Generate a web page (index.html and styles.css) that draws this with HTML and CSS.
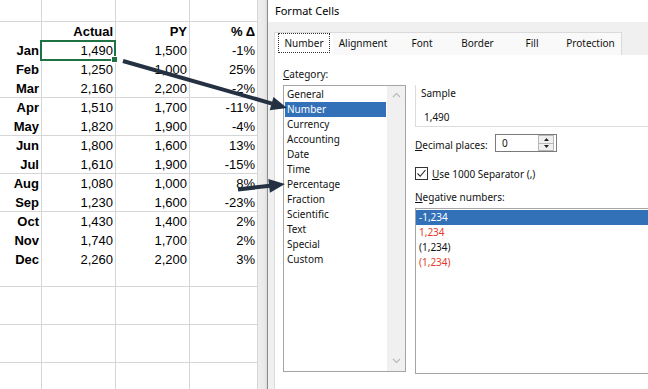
FILE: index.html
```html
<!DOCTYPE html>
<html>
<head>
<meta charset="utf-8">
<title>Format Cells</title>
<link rel="stylesheet" href="styles.css">
</head>
<body>
<div class="screen">
  <section class="sheet">
    <div class="grid">
      <div class="row head"><span></span><span>Actual</span><span>PY</span><span>% Δ</span></div>
      <div class="row"><span class="m">Jan</span><span class="sel">1,490</span><span>1,500</span><span>-1%</span></div>
      <div class="row"><span class="m">Feb</span><span>1,250</span><span>1,000</span><span>25%</span></div>
      <div class="row"><span class="m">Mar</span><span>2,160</span><span>2,200</span><span>-2%</span></div>
      <div class="row"><span class="m">Apr</span><span>1,510</span><span>1,700</span><span>-11%</span></div>
      <div class="row"><span class="m">May</span><span>1,820</span><span>1,900</span><span>-4%</span></div>
      <div class="row"><span class="m">Jun</span><span>1,800</span><span>1,600</span><span>13%</span></div>
      <div class="row"><span class="m">Jul</span><span>1,610</span><span>1,900</span><span>-15%</span></div>
      <div class="row"><span class="m">Aug</span><span>1,080</span><span>1,000</span><span>8%</span></div>
      <div class="row"><span class="m">Sep</span><span>1,230</span><span>1,600</span><span>-23%</span></div>
      <div class="row"><span class="m">Oct</span><span>1,430</span><span>1,400</span><span>2%</span></div>
      <div class="row"><span class="m">Nov</span><span>1,740</span><span>1,700</span><span>2%</span></div>
      <div class="row"><span class="m">Dec</span><span>2,260</span><span>2,200</span><span>3%</span></div>
    </div>
  </section>
  <div class="gap"></div>
  <section class="dialog">
    <div class="title">Format Cells</div>
    <div class="dbody">
      <div class="tabs">
        <div class="tab t1 active"><span class="focus">Number</span></div>
        <div class="tab t2">Alignment</div>
        <div class="tab t3">Font</div>
        <div class="tab t4">Border</div>
        <div class="tab t5">Fill</div>
        <div class="tab t6">Protection</div>
      </div>
      <div class="panel">
        <div class="col-left">
          <div class="lbl"><u>C</u>ategory:</div>
          <div class="listbox cat">
            <ul class="items">
              <li>General</li>
              <li class="on">Number</li>
              <li>Currency</li>
              <li>Accounting</li>
              <li>Date</li>
              <li>Time</li>
              <li>Percentage</li>
              <li>Fraction</li>
              <li>Scientific</li>
              <li>Text</li>
              <li>Special</li>
              <li>Custom</li>
            </ul>
            <div class="vscroll">
              <svg width="9" height="6" viewBox="0 0 9 6"><polyline points="1,5 4.5,1.5 8,5" fill="none" stroke="#b9b9b9" stroke-width="1.2"/></svg>
              <svg width="9" height="6" viewBox="0 0 9 6"><polyline points="1,1 4.5,4.5 8,1" fill="none" stroke="#b9b9b9" stroke-width="1.2"/></svg>
            </div>
          </div>
        </div>
        <div class="col-right">
          <div class="sample">
            <div class="sample-title">Sample</div>
            <div class="sample-val">1,490</div>
          </div>
          <div class="decimal">
            <span class="dec-lbl"><u>D</u>ecimal places:</span>
            <div class="spin">
              <span class="spin-val">0</span>
              <div class="spin-btns">
                <span class="sb"><svg width="5" height="3" viewBox="0 0 5 3"><polygon points="0,3 2.5,0 5,3" fill="#222"/></svg></span>
                <span class="sb"><svg width="5" height="3" viewBox="0 0 5 3"><polygon points="0,0 2.5,3 5,0" fill="#222"/></svg></span>
              </div>
            </div>
          </div>
          <div class="check">
            <span class="cb"><svg width="11" height="11" viewBox="0 0 11 11"><polyline points="1.5,5.5 4.2,8.3 9.5,2" fill="none" stroke="#222" stroke-width="1.1"/></svg></span>
            <span><u>U</u>se 1000 Separator (,)</span>
          </div>
          <div class="lbl neg-lbl"><u>N</u>egative numbers:</div>
          <ul class="listbox neg">
            <li class="on">-1,234</li>
            <li class="red">1,234</li>
            <li>(1,234)</li>
            <li class="red">(1,234)</li>
          </ul>
        </div>
      </div>
    </div>
  </section>
  <svg class="arrows" width="648" height="389" viewBox="0 0 648 389">
    <line x1="123" y1="61" x2="272" y2="103.6" stroke="#243142" stroke-width="4"/>
    <polygon points="287,108 269.7,110.3 273.5,96.9" fill="#243142"/>
    <line x1="238" y1="189.5" x2="270" y2="185.7" stroke="#243142" stroke-width="4"/>
    <polygon points="285,184 269.9,192.7 268.3,178.9" fill="#243142"/>
  </svg>
</div>
</body>
</html>
```

FILE: styles.css
```css
* { box-sizing: border-box; margin: 0; padding: 0; }

html, body {
  width: 648px;
  height: 389px;
  overflow: hidden;
  background: #fff;
}

.screen {
  position: relative;
  display: flex;
  width: 648px;
  height: 389px;
}

/* ---------- spreadsheet ---------- */
.sheet {
  width: 257px;
  flex: none;
  font-family: "Liberation Sans", Arial, sans-serif;
  font-size: 13px;
  color: #000;
  background:
    linear-gradient(#d6d6d6, #d6d6d6) 0 21px / 100% 1px no-repeat,
    repeating-linear-gradient(to bottom, transparent 0 36.9px, #d6d6d6 36.9px 37.9px) 0 60.1px / 100% 340px no-repeat,
    linear-gradient(#d6d6d6, #d6d6d6) 41px 0 / 1px 100% no-repeat,
    linear-gradient(#d6d6d6, #d6d6d6) 115px 0 / 1px 100% no-repeat,
    linear-gradient(#d6d6d6, #d6d6d6) 189px 0 / 1px 100% no-repeat,
    #fff;
}

.grid {
  padding-top: 22px;
}

.row {
  display: grid;
  grid-template-columns: 41px 74px 74px 68px;
  height: 19px;
  line-height: 19px;
}

.row span {
  text-align: right;
  padding-right: 2px;
  white-space: nowrap;
}

.row.head span,
.row .m {
  font-weight: bold;
}

.sel {
  position: relative;
  outline: 2px solid #1f7244;
  outline-offset: -1px;
}

.sel::after {
  content: "";
  position: absolute;
  right: -3px;
  bottom: -3px;
  width: 5px;
  height: 5px;
  background: #1f7244;
  border: 1px solid #fff;
}

.gap {
  width: 10px;
  flex: none;
  border-left: 1px solid #d6d6d6;
  background: linear-gradient(to right, #eeeeee 0, #eaeaea 70%, #dcdcdc 100%);
}

/* ---------- dialog ---------- */
.dialog {
  flex: 1;
  display: flex;
  flex-direction: column;
  border-left: 1px solid #8a8a8a;
  font-family: "Noto Sans", "Open Sans", sans-serif;
  font-size: 10px;
  color: #111;
  min-width: 0;
}

.title {
  height: 22px;
  line-height: 21px;
  padding-left: 7px;
  font-size: 11px;
  background: #fff;
  color: #000;
}

.dbody {
  flex: 1;
  display: flex;
  flex-direction: column;
  background: #f0f0f0;
  padding: 10px 0 0 6px;
}

.tabs {
  display: flex;
  width: 348px;
  height: 23px;
  background: #f9f9f9;
  border: 1px solid #dadada;
  border-bottom: none;
}

.tab {
  text-align: center;
  line-height: 21px;
  white-space: nowrap;
}

.tab.active { background: #fff; }
.t1 { width: 58px; }
.t2 { width: 60px; }
.t3 { width: 58px; }
.t4 { width: 53px; }
.t5 { width: 56px; }
.t6 { width: 61px; }

.focus {
  display: block;
  margin: 0 3px;
  height: 20px;
  line-height: 19px;
  border: 1px dotted #333;
}

.panel {
  flex: 1;
  display: grid;
  grid-template-columns: 123px 250px;
  column-gap: 9px;
  align-items: start;
  background: #fff;
  border-left: 1px solid #dadada;
  padding: 12px 0 0 8px;
}

.lbl {
  height: 14px;
  line-height: 14px;
}

.listbox {
  list-style: none;
  border: 1px solid #a5a5a5;
  margin-top: 4px;
}

.cat {
  display: flex;
  height: 287px;
}

.items {
  list-style: none;
  flex: 1;
  padding-top: 1px;
}

.items li,
.neg li {
  height: 15px;
  line-height: 15px;
  white-space: nowrap;
}

.items li {
  margin: 0 1px;
  padding-left: 2px;
}

li.on {
  background: #3271b8;
  color: #fff;
}

.vscroll {
  width: 18px;
  flex: none;
  display: flex;
  flex-direction: column;
  justify-content: space-between;
  align-items: center;
  background: #f0f0f0;
  padding: 6px 0 7px;
}

.col-right {
  padding-top: 18px;
}

.sample {
  height: 42px;
  border-left: 1px solid #dcdcdc;
  border-bottom: 1px solid #dcdcdc;
  padding: 1px 0 0 5px;
}

.sample-title {
  line-height: 14px;
}

.sample-val {
  margin-top: 10px;
  padding-left: 3px;
  line-height: 14px;
}

.decimal {
  display: flex;
  align-items: center;
  margin-top: 7px;
  height: 18px;
}

.dec-lbl {
  width: 80px;
  padding-top: 3px;
}

.spin {
  display: flex;
  align-items: center;
  width: 62px;
  height: 18px;
  border: 1px solid #7a7a7a;
}

.spin-val {
  padding-left: 6px;
}

.spin-btns {
  margin: 0 2px 0 auto;
  display: flex;
  flex-direction: column;
  width: 16px;
  height: 16px;
}

.sb {
  flex: 1;
  display: flex;
  align-items: center;
  justify-content: center;
  background: #efefef;
  border: 1px solid #b8b8b8;
}

.sb + .sb { border-top: none; }

.check {
  display: flex;
  align-items: center;
  gap: 4px;
  margin-top: 15px;
  height: 13px;
}

.cb {
  width: 13px;
  height: 13px;
  flex: none;
  display: flex;
  align-items: center;
  justify-content: center;
  border: 1px solid #333;
  background: #fff;
}

.neg-lbl {
  margin-top: 10px;
}

.neg {
  height: 166px;
  border-right: none;
  padding-top: 1px;
}

.neg li {
  padding-left: 3px;
}

.neg li.red {
  color: #e53b27;
}

.arrows {
  position: absolute;
  left: 0;
  top: 0;
  pointer-events: none;
}
```
